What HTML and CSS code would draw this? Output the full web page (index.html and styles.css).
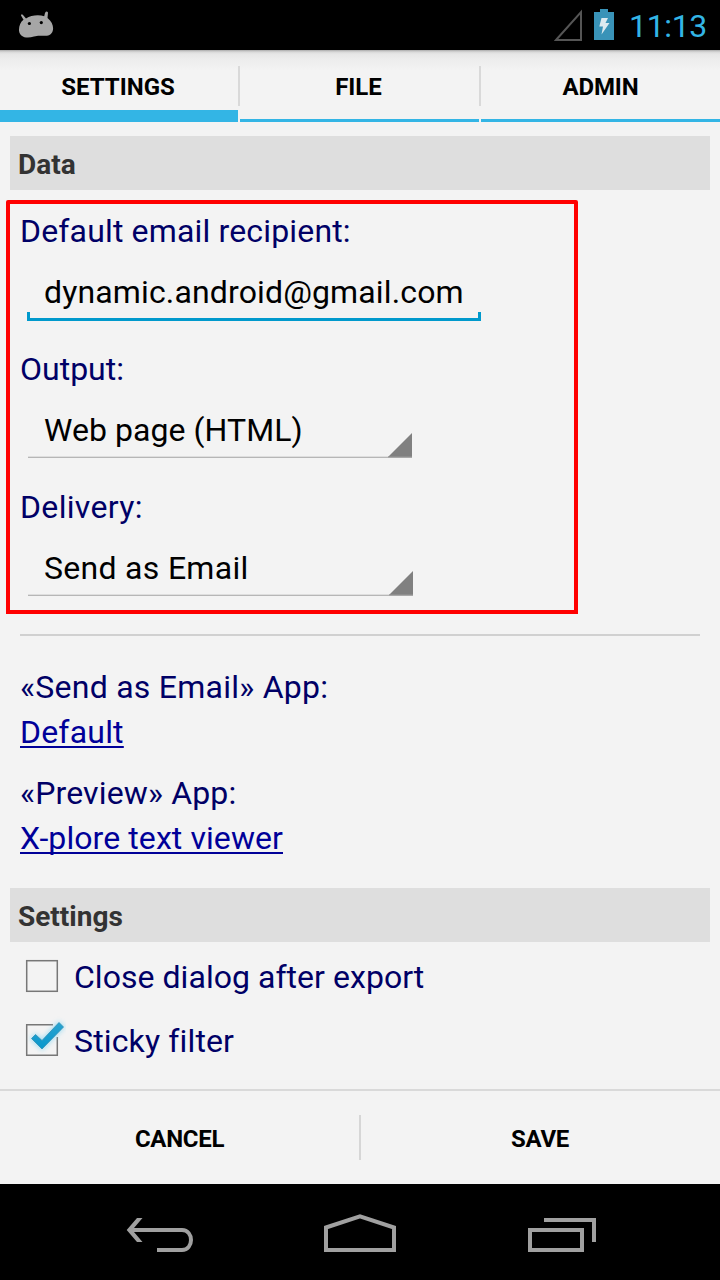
FILE: index.html
```
<!DOCTYPE html>
<html lang="en">
<head>
<meta charset="utf-8">
<title>Export settings</title>
<link rel="stylesheet" href="styles.css">
</head>
<body>
<div class="screen">
  <header class="status">
    <svg class="droid" width="38" height="30" viewBox="0 0 38 30">
      <path d="M3 4.500Q3.500 2.500 5 4L8 7.500C13 4 21 3.500 26.200 5.200L27 2Q28.500-.5 30 1.500L29.500 7C34 10.500 35.500 15 35 18.500c-.5 4.500-4 6.800-9 6.300-4 0-6.500-.5-10 .8C8 28 1.500 26 1 19.500.8 15 2.500 11 5.500 8.800z" fill="#a6a6a6"/>
      <circle cx="11.400" cy="12.500" r="1.600"/><circle cx="23.300" cy="11.600" r="1.600"/>
    </svg>
    <div class="status-right">
      <svg width="29" height="34" viewBox="0 0 29 34"><path d="M2 32L27 4V32z" fill="none" stroke="#555" stroke-width="2"/></svg>
      <svg class="battery" width="20" height="31" viewBox="0 0 20 31"><path d="M0 3H6V0H14V3H20V31H0z" fill="#3993b8"/><path d="M7.500 9H14L11.500 14H15.500L7.500 25.500L9 17.500H5.300z" fill="#dceaf0"/></svg>
      <span class="clock">11:13</span>
    </div>
  </header>
  <nav class="tabs">
    <div class="tab active"><span class="t-settings">SETTINGS</span></div>
    <i class="tab-sep"></i>
    <div class="tab"><span class="t-file">FILE</span></div>
    <i class="tab-sep"></i>
    <div class="tab"><span class="t-admin">ADMIN</span></div>
  </nav>
  <main class="content">
    <h2 class="section"><span class="t-data">Data</span></h2>
    <section class="highlight">
      <div class="line"><span class="t-recipient">Default email recipient:</span></div>
      <div class="field">
        <div class="line value"><span class="t-address">dynamic.android@gmail.com</span></div>
        <div class="bracket"></div>
      </div>
      <div class="line"><span class="t-output">Output:</span></div>
      <div class="field spinner">
        <div class="line value"><span class="t-web">Web page (HTML)</span></div>
        <svg class="corner" width="24" height="25" viewBox="0 0 24 25"><path d="M24 0V24H0z" fill="#808080"/><path d="M0 24H24" stroke="#9a9a9a" stroke-width="1"/></svg>
      </div>
      <div class="line"><span class="t-delivery">Delivery:</span></div>
      <div class="field spinner wide">
        <div class="line value"><span class="t-send">Send as Email</span></div>
        <svg class="corner" width="24" height="25" viewBox="0 0 24 25"><path d="M24 0V24H0z" fill="#808080"/><path d="M0 24H24" stroke="#9a9a9a" stroke-width="1"/></svg>
      </div>
    </section>
    <hr class="rule">
    <section class="apps">
      <div class="line"><span class="t-sendapp">«Send as Email» App:</span></div>
      <a class="line link"><span class="t-default">Default</span></a>
      <div class="line second"><span class="t-preview">«Preview» App:</span></div>
      <a class="line link"><span class="t-xplore">X-plore text viewer</span></a>
    </section>
    <h2 class="section"><span class="t-sect">Settings</span></h2>
    <div class="option">
      <svg class="check" width="48" height="48" viewBox="0 0 48 48"><rect x="8.700" y="8.700" width="30.600" height="30.600" fill="none" stroke="#777" stroke-width="1.500"/></svg>
      <div class="line"><span class="t-close">Close dialog after export</span></div>
    </div>
    <div class="option">
      <svg class="check" width="48" height="48" viewBox="0 0 48 48">
        <defs>
          <filter id="glow" x="-40%" y="-40%" width="180%" height="180%"><feGaussianBlur stdDeviation="2.500"/></filter>
          <linearGradient id="tick" x1="0" y1="0" x2="0" y2="1"><stop offset="0" stop-color="#2aa3d0"/><stop offset="1" stop-color="#0797cc"/></linearGradient>
        </defs>
        <path d="M35 8.700H8.700V39.300H39.300V21" fill="none" stroke="#777" stroke-width="1.500"/>
        <path d="M13.500 22.500L17.500 18.500L24 24.500L41 6.500L45.500 11L24 33z" fill="#7fd3f2" stroke="#7fd3f2" stroke-width="2" opacity=".7" filter="url(#glow)"/>
        <path d="M13.500 22.500L17.500 18.500L24 24.500L41 6.500L45.500 11L24 33z" fill="url(#tick)" stroke="#2e90b5" stroke-width=".8"/>
      </svg>
      <div class="line"><span class="t-sticky">Sticky filter</span></div>
    </div>
  </main>
  <footer class="actions">
    <div class="action"><span class="t-cancel">CANCEL</span></div>
    <i class="action-sep"></i>
    <div class="action"><span class="t-save">SAVE</span></div>
  </footer>
  <div class="navbar">
    <svg width="68" height="40" viewBox="0 0 68 40"><path d="M5 16H56C68 16 68 36 56 36H31" fill="none" stroke="#a0a0a0" stroke-width="4"/><path d="M.7 16L11 4H16.500L6.300 16L16.500 28H11z" fill="#a0a0a0"/></svg>
    <svg class="home" width="72" height="40" viewBox="0 0 72 40" fill="none" stroke="#a0a0a0" stroke-width="4"><path d="M2 13.500L36 2.300L70 13.500V36H2z"/></svg>
    <svg width="68" height="40" viewBox="0 0 68 40" fill="none" stroke="#a0a0a0" stroke-width="4"><path d="M2 16H54V36H2z"/><path d="M16 6H66V28"/></svg>
  </div>
</div>
</body>
</html>
```
FILE: styles.css
```
* { box-sizing: border-box; }
body { margin: 0; font-family: Roboto, sans-serif; background: #f3f3f3; color: #000; }
.screen { width: 720px; height: 1280px; display: flex; flex-direction: column; overflow: hidden; background: #f3f3f3; }
svg { display: block; flex: none; }
span { white-space: nowrap; }

.status { height: 50px; background: #000; display: flex; justify-content: space-between; padding: 0 12px 0 18px; }
.droid { margin-top: 11px; }
.status-right { display: flex; }
.status-right svg:first-child { margin-top: 8px; }
.battery { margin: 9px 15px 0 11px; }
.clock { color: #33b5e5; font-size: 32px; line-height: 52px; width: 79px; letter-spacing: -.35px; }

.tabs { height: 72px; display: flex; background: linear-gradient(#aaa 0, #d8d8d8 2px, #e6e6e6 4px, #ededed 10px, #f3f3f3 20px); }
.tab { flex: 1; display: flex; justify-content: center; font-size: 24px; font-weight: 700; line-height: 75px; border-bottom: 3px solid #33b5e5; height: 72px; }
.tab.active { flex: none; width: 238px; border-bottom-width: 12px; }
.tab-sep { width: 2px; height: 40px; margin-top: 16px; background: #d9d9d9; }
.t-settings, .t-file { padding-right: 2px; }
.t-admin { letter-spacing: -.1px; }

.content { height: 967px; padding-top: 14px; }
.section { margin: 0 10px; height: 54px; padding-left: 8px; background: #dedede; color: #333; font-size: 28px; line-height: 58px; font-weight: 700; }
.line { display: block; height: 38px; line-height: 38px; font-size: 32px; color: #006; }
.value { color: #000; }
.t-recipient { letter-spacing: .16px; }
.t-address { letter-spacing: .14px; }
.t-web { letter-spacing: .06px; }
.t-delivery { letter-spacing: .33px; }
.t-send { letter-spacing: .3px; }
.t-sendapp { letter-spacing: .25px; }
.t-default { letter-spacing: .2px; }
.t-preview { letter-spacing: .14px; }
.t-xplore { letter-spacing: .08px; }
.t-close { letter-spacing: .04px; }
.t-sticky { letter-spacing: .14px; }

.highlight { margin: 10px 0 0 6px; width: 572px; height: 414px; border: 4px solid #f00; border-radius: 2px 2px 0 0; padding: 8px 0 0 10px; }
.field { position: relative; margin: 23px 0 0 7px; width: 454px; height: 77px; }
.field .value { padding-left: 17px; }
.bracket { margin-top: 1px; height: 9px; border: 3px solid #0099cc; border-top: 0; }
.spinner { margin-left: 8px; width: 384px; height: 47px; border-bottom: 1px solid #b6b6b6; margin-bottom: 30px; box-shadow: inset 0 -1px #dedede; }
.spinner .value { padding-left: 16px; }
.spinner.wide { width: 385px; }
.corner { position: absolute; right: 0; bottom: -1px; }

.rule { margin: 20px 20px 0; height: 2px; border: 0; background: #d0d0d0; }
.apps { height: 252px; padding: 32px 20px 0; }
.link { margin-top: 7px; color: #009; text-decoration: underline; text-decoration-thickness: 2px; text-underline-offset: 3px; text-decoration-skip-ink: none; }
.second { margin-top: 23px; }

.option { display: flex; height: 64px; padding: 0 18px; }
.option .line { margin: 16px 0 0 8px; }
.check { margin-top: 10px; }

.actions { height: 95px; border-top: 2px solid #d9d9d9; display: flex; }
.action { flex: 1; display: flex; justify-content: center; font-size: 24px; font-weight: 700; line-height: 97px; }
.action-sep { width: 2px; height: 45px; margin-top: 24px; background: #d6d6d6; }
.t-cancel { letter-spacing: -.3px; }
.t-save { letter-spacing: -.3px; padding-right: 1px; }

.navbar { height: 96px; background: #000; display: flex; padding: 30px 0 0 126px; }
.home { margin: 0 132px 0 130px; }
```
